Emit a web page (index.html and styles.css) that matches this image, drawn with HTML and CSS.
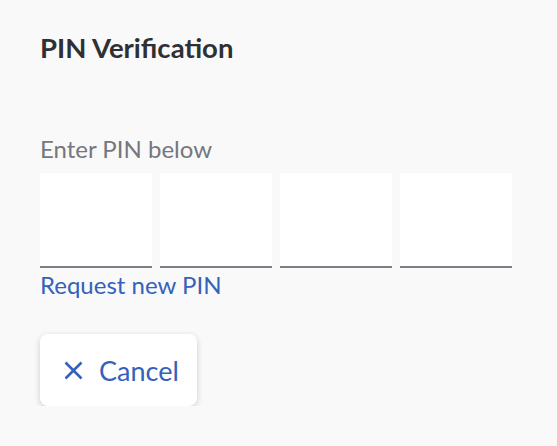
FILE: index.html
```html
<!DOCTYPE html>
<html>
<head>
<meta charset="utf-8">
<link rel="stylesheet" href="styles.css">
</head>
<body>
<div class="dialog">
  <h1 class="title">PIN Verification</h1>
  <div class="field">
    <label class="label">Enter PIN below</label>
    <div class="pins">
      <div class="pin"></div>
      <div class="pin"></div>
      <div class="pin"></div>
      <div class="pin"></div>
    </div>
    <a class="link">Request new PIN</a>
  </div>
  <button class="btn">
    <svg class="icon" viewBox="0 0 19 19" width="19" height="19"><path d="M1.5 1.5 L17.5 17.5 M17.5 1.5 L1.5 17.5" stroke="currentColor" stroke-width="2.6" fill="none"/></svg>
    <span>Cancel</span>
  </button>
</div>
</body>
</html>
```
FILE: styles.css
```css
* { box-sizing: border-box; }
html, body { margin: 0; padding: 0; background: #f9f9f9; }
body { font-family: Lato, "Noto Sans", sans-serif; }
.dialog { padding: 28px 40px 0 40px; display: flex; flex-direction: column; align-items: flex-start; }
.title { margin: 0; font-size: 27.5px; font-weight: 700; color: #2f3034; line-height: 40px; }
.field { margin-top: 66px; display: flex; flex-direction: column; }
.label { font-size: 24px; color: #75777c; line-height: 30px; }
.pins { display: flex; gap: 8px; margin-top: 9px; }
.pin { width: 112px; height: 95px; background: #fff; border-bottom: 2px solid #7c7f86; }
.link { font-size: 24px; color: #3461b9; line-height: 30px; margin-top: 2px; }
.btn { margin-top: 34px; width: 157px; height: 72px; border: none; background: #fff; border-radius: 8px; box-shadow: 0 2px 6px rgba(0,0,0,0.18); display: flex; align-items: center; gap: 16px; padding: 0 0 0 24px; color: #3461b9; font-family: inherit; font-size: 27px; }
.icon { display: block; }
```
